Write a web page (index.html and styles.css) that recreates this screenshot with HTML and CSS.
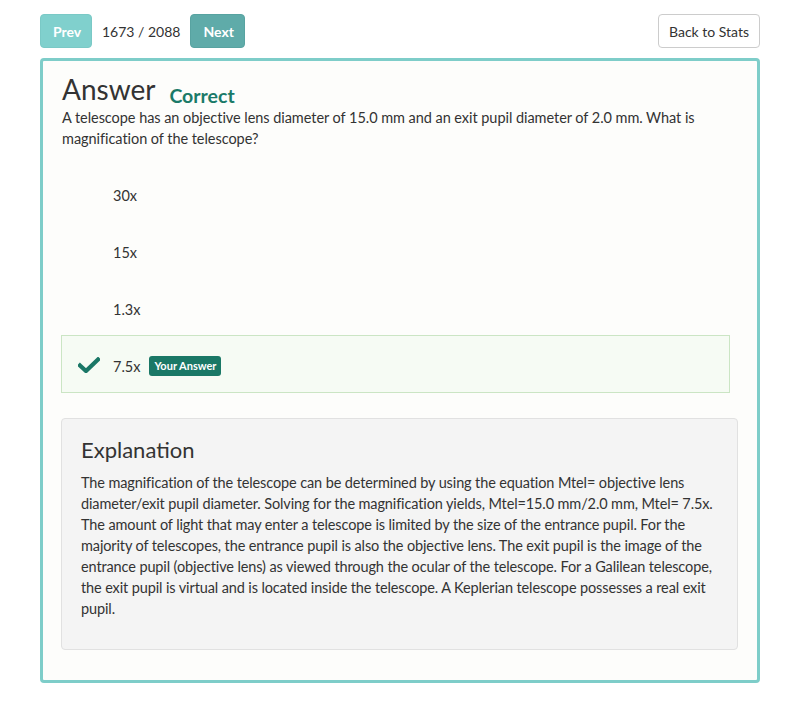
FILE: index.html
```html
<!DOCTYPE html>
<html>
<head>
<meta charset="utf-8">
<link rel="stylesheet" href="styles.css">
</head>
<body>
<div class="topbar">
  <div class="nav">
    <button class="btn btn-prev">Prev</button>
    <span class="counter">1673 / 2088</span>
    <button class="btn btn-next">Next</button>
  </div>
  <button class="btn btn-back">Back to Stats</button>
</div>
<div class="panel">
  <div class="title-row">
    <h1 class="title">Answer</h1>
    <span class="status">Correct</span>
  </div>
  <p class="question">A telescope has an objective lens diameter of 15.0 mm and an exit pupil diameter of 2.0 mm. What is magnification of the telescope?</p>
  <ul class="options">
    <li class="option"><span class="mark"></span><span class="opt-text">30x</span></li>
    <li class="option"><span class="mark"></span><span class="opt-text">15x</span></li>
    <li class="option"><span class="mark"></span><span class="opt-text">1.3x</span></li>
    <li class="option selected">
      <span class="mark">
        <svg width="22" height="16" viewBox="0 0 22 16"><path d="M2 8.5 L8 14 L20 2.5" fill="none" stroke="#1a7766" stroke-width="4.2" stroke-linecap="square"/></svg>
      </span>
      <span class="opt-text">7.5x</span>
      <span class="badge">Your Answer</span>
    </li>
  </ul>
  <div class="explanation">
    <h2 class="exp-title">Explanation</h2>
    <p class="exp-text">The magnification of the telescope can be determined by using the equation Mtel= objective lens diameter/exit pupil diameter. Solving for the magnification yields, Mtel=15.0 mm/2.0 mm, Mtel= 7.5x. The amount of light that may enter a telescope is limited by the size of the entrance pupil. For the majority of telescopes, the entrance pupil is also the objective lens. The exit pupil is the image of the entrance pupil (objective lens) as viewed through the ocular of the telescope. For a Galilean telescope, the exit pupil is virtual and is located inside the telescope. A Keplerian telescope possesses a real exit pupil.</p>
  </div>
</div>
</body>
</html>
```
FILE: styles.css
```css
* { box-sizing: border-box; }
body {
  margin: 0;
  background: #ffffff;
  font-family: Lato, "Open Sans", sans-serif;
  color: #333333;
}
.topbar {
  display: flex;
  justify-content: space-between;
  align-items: center;
  padding: 14px 40px 0 40px;
}
.nav {
  display: flex;
  align-items: center;
  gap: 10px;
}
.btn {
  font-family: inherit;
  height: 34px;
  border-radius: 4px;
  font-size: 14px;
  padding: 0 12px;
  border: 1px solid transparent;
  cursor: pointer;
}
.btn-prev {
  background: #80d0cd;
  border-color: #7ac9c6;
  color: #ffffff;
  font-weight: 700;
  width: 52px;
}
.btn-next {
  background: #5faba9;
  border-color: #58a3a1;
  color: #ffffff;
  font-weight: 700;
  width: 55px;
}
.counter {
  font-size: 14px;
  color: #333;
}
.btn-back {
  background: #ffffff;
  border-color: #cccccc;
  color: #333333;
  width: 102px;
  padding: 0;
}
.panel {
  margin: 10px 40px 0 40px;
  border: 3px solid #7ecdc9;
  border-radius: 4px;
  background: #fdfdfb;
  padding: 10px 19px 30px 18px;
}
.title-row {
  display: flex;
  align-items: baseline;
  gap: 14px;
  padding-left: 1px;
}
.title {
  margin: 0;
  font-size: 28px;
  font-weight: 400;
  line-height: 36px;
}
.status {
  font-size: 19.5px;
  font-weight: 700;
  color: #1a7a68;
  position: relative;
  top: 3px;
}
.question {
  margin: 0;
  padding-left: 1px;
  font-size: 14.5px;
  letter-spacing: -0.05px;
  line-height: 21px;
  padding-right: 20px;
}
.options {
  list-style: none;
  margin: 16px 8px 0 0;
  padding: 0;
}
.option {
  display: flex;
  align-items: center;
  height: 57px;
  padding-left: 16px;
  padding-top: 4px;
  border: 1px solid transparent;
  font-size: 14.5px;
}
.option.selected {
  height: 58px;
  margin-top: -1px;
  background: #f6fbf4;
  border-color: #cbe5c4;
}
.mark {
  width: 35px;
  display: flex;
  align-items: center;
  margin-top: -2px;
}
.opt-text {
  margin-right: 9px;
}
.badge {
  background: #1a7866;
  color: #ffffff;
  font-size: 11px;
  font-weight: 700;
  padding: 3px 5px;
  border-radius: 3px;
  line-height: 14px;
}
.explanation {
  margin-top: 25px;
  background: #f4f4f4;
  border: 1px solid #e1e1e1;
  border-radius: 4px;
  padding: 17px 20px 30px 19px;
}
.exp-title {
  margin: 0 0 8px 0;
  font-size: 22px;
  font-weight: 400;
  line-height: 28px;
}
.exp-text {
  margin: 0;
  font-size: 14.5px;
  letter-spacing: -0.12px;
  line-height: 21px;
}
```
